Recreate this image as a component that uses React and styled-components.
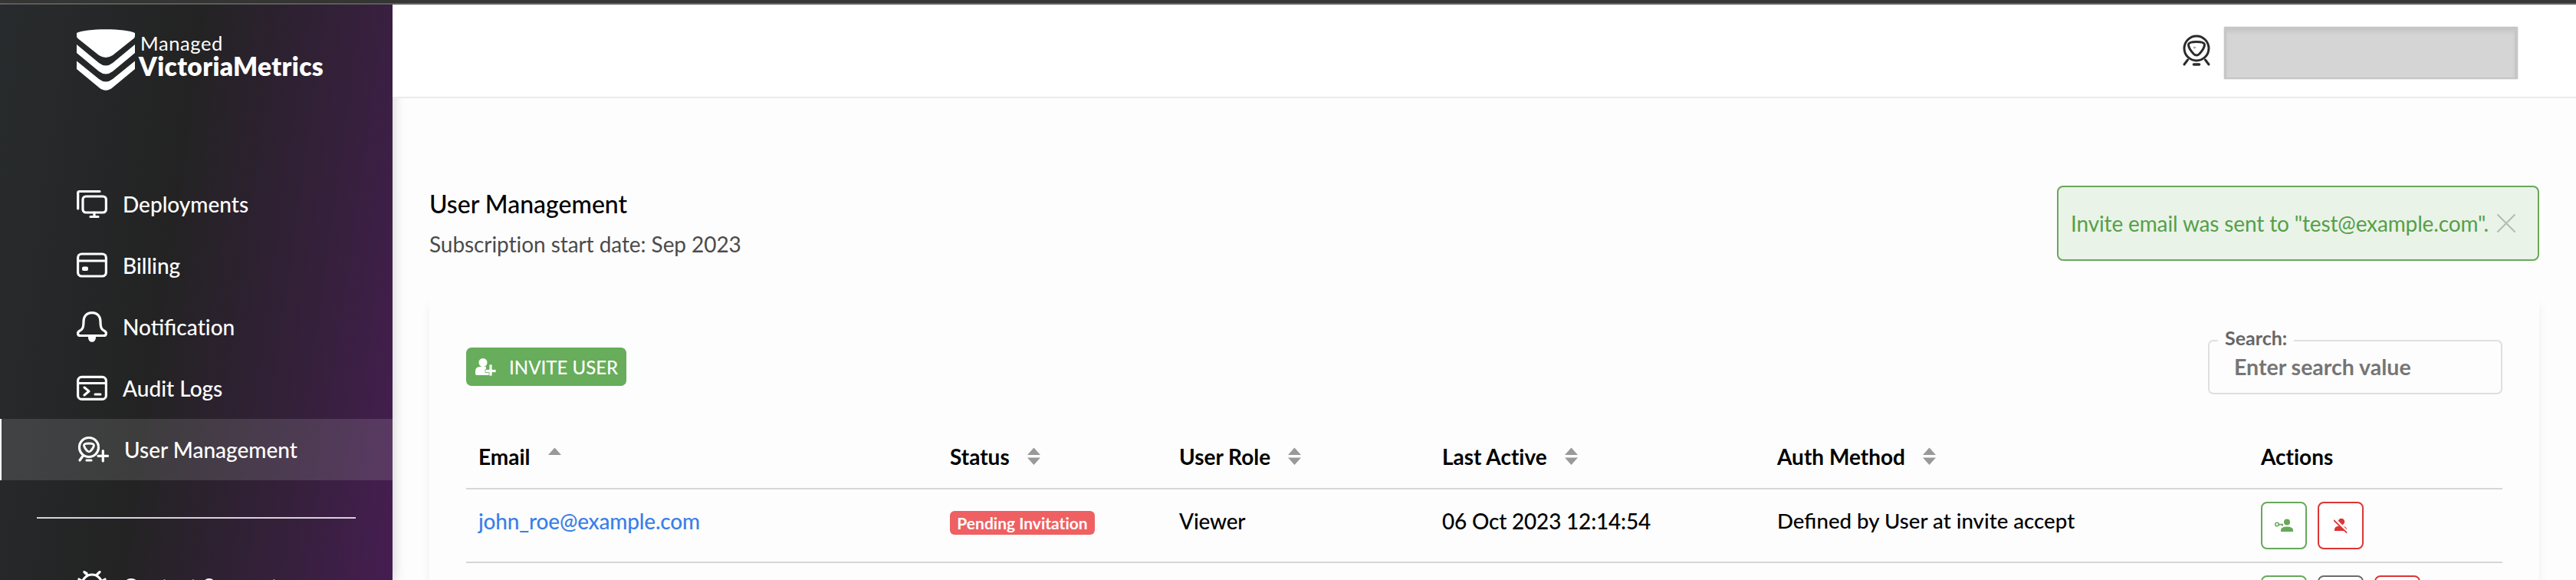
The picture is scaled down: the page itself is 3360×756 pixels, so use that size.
import React from "react";
import styled, { createGlobalStyle } from "styled-components";

const Global = createGlobalStyle`
  * { box-sizing: border-box; }
  html, body { margin: 0; padding: 0; overflow: hidden; background: #fdfdfd; }
  body { font-family: Lato, "Liberation Sans", sans-serif; font-size: 28px; color: #000; font-variant-ligatures: none; }
  svg { display: block; flex: none; }
`;

const Page = styled.div`
  height: 756px; display: flex; flex-direction: column; overflow: hidden;
`;
const Strip = styled.div`
  flex: none; height: 6px; background: #373835; border-bottom: 2px solid #636363;
`;
const Body = styled.div` flex: 1; min-height: 0; display: flex; `;
const Sidebar = styled.aside`
  position: relative; z-index: 1; width: 512px; flex: none; overflow: hidden; color: #fff;
  background: linear-gradient(98deg, #282b2d 0%, #232323 42%, #35203b 76%, #4a1d57 106%);
  box-shadow: 2px 0 14px rgba(0,0,0,.17);
`;
const Brand = styled.div` display: flex; padding: 32px 0 0 100px; height: 220px; `;
const BrandText = styled.div` display: flex; flex-direction: column; padding: 4px 0 0 5px; `;
const BrandTop = styled.span` font-size: 25.5px; line-height: 28px; padding-left: 2px; letter-spacing: .6px; `;
const BrandName = styled.span` font-size: 33.500px; line-height: 33px; font-weight: 800; letter-spacing: .4px; `;
const Nav = styled.nav` display: flex; flex-direction: column; `;
const NavItem = styled.a`
  flex: none; height: 80px; display: flex; align-items: center; gap: 20px; padding-left: 100px; font-weight: 500;
  ${p => p.$active && "background: rgba(255,255,255,.12); box-shadow: inset 2px 0 #fff; gap: 22px;"}
`;
const Joined = styled.span` font-variant-ligatures: common-ligatures; `;
const Rule = styled.hr` width: 416px; height: 2px; margin: 48px; border: 0; background: #d8d0dc; `;
const Main = styled.main` flex: 1; min-width: 0; display: flex; flex-direction: column; background: #fdfdfd; `;
const Header = styled.header`
  position: relative; z-index: 2; flex: none; height: 122px; background: #fff; border-bottom: 2px solid #ebebeb;
  display: flex; justify-content: flex-end; padding: 29px 76px 0 0; gap: 18px; color: #2b2b2b;
`;
const Account = styled.div`
  width: 383px; height: 68px; background: #d5d5d5; border: solid #c6c6c6; border-width: 4px 4px 2px 3px;
  box-shadow: inset 0 4px 3px #cbcbcb, 0 0 2px #ccc;
`;
const Avatar = styled.div` padding-top: 9px; `;
const Content = styled.div` flex: 1; padding: 114px 48px 0; display: flex; flex-direction: column; `;
const TitleRow = styled.div` display: flex; justify-content: space-between; height: 148px; `;
const Title = styled.h1` margin: 5px 0 0; font-size: 32px; line-height: 38px; font-weight: 500; `;
const Sub = styled.p` margin: 16px 0 0; font-size: 28px; line-height: 34px; color: #4b4b4b; letter-spacing: -.07px; `;
const Toast = styled.div`
  width: 629px; height: 98px; border: 2px solid #67a85b; border-radius: 8px; background: #eaf3e8; color: #55a048;
  display: flex; align-items: center; padding-left: 16px; gap: 11px; letter-spacing: -.14px; white-space: nowrap;
`;
const Card = styled.section`
  height: 800px; flex: none; background: #fdfdfd; padding: 63px 48px 0;
  box-shadow: 0 8px 12px rgba(0,0,0,.06);
`;
const Tools = styled.div` display: flex; justify-content: space-between; height: 109px; `;
const Invite = styled.button`
  width: 209px; height: 50px; border: 0; border-radius: 7px; background: #67ad5b; color: #fff;
  font: 500 24px Lato, sans-serif; display: flex; align-items: center; padding: 0 0 0 12px; gap: 17px; white-space: nowrap;
`;
const Field = styled.fieldset`
  width: 384px; height: 84px; margin: -23px 0 0; padding: 0 0 0 32px; border: 2px solid #dfdfdf; border-radius: 7px;
  font-weight: 700;
`;
const Legend = styled.legend`
  margin-left: -21px; padding: 0 9px 7px; font-size: 25px; line-height: 20px; color: #666;
`;
const Input = styled.input`
  border: 0; padding: 0; background: none; display: block; width: 320px; height: 42px; outline: 0; font: 700 28.500px Lato, sans-serif;
  &::placeholder { color: #757575; opacity: 1; }
`;
const Row = styled.div`
  display: grid; grid-template-columns: 615px 299px 343px 437px 631px 1fr; height: ${p => p.$h}px;
  padding: ${p => p.$top}px 0 0 16px; border-bottom: 2px solid #d6d6d6; font-weight: ${p => (p.$head ? 700 : 500)}; line-height: 34px;
  letter-spacing: ${p => (p.$head ? "0" : "-.2px")};
`;
const Th = styled.div` display: flex; gap: 23px; `;
const Link = styled.a` color: #3b7fe8; `;
const Method = styled.div` font-size: 27.700px; letter-spacing: normal; font-variant-ligatures: common-ligatures; `;
const Unjoined = styled.span` font-variant-ligatures: none; `;
const Badge = styled.span`
  display: block; margin-top: 4px; width: 189px; height: 31px; line-height: 31px; text-align: center; background: #ee6062; color: #fff;
  border-radius: 6px; font-size: 21px; font-weight: 700; letter-spacing: 0;
`;
const Actions = styled.div` display: flex; gap: 14px; margin-top: -8px; `;
const Act = styled.button`
  width: 60px; height: 62px; padding: 0; border: 2px solid ${p => p.$c}; border-radius: 8px; background: #fff; color: ${p => p.$c};
  display: flex; align-items: center; justify-content: center;
`;

const Logo = () => (
  <svg width="76" height="80" viewBox="0 0 76 80" fill="#fff">
    <path d="M0 5C10-1.500 66-1.500 76 5V9Q76 11 74 12.500L47 34Q38 40 29 34L2 12.500Q0 11 0 9Z" />
    <path d="M0 20L29 44Q38 51 47 44L76 20V31L47 55Q38 62 29 55L0 31Z" />
    <path d="M0 41.500L29 65Q38 72 47 65L76 41.500V52L47 76Q38 83.500 29 76L0 52Z" />
  </svg>
);
const Line = ({ children, w = 40, h = 40, s = 3.2, ...rest }) => (
  <svg width={w} height={h} viewBox={`0 0 ${w} ${h}`} fill="none" stroke="currentColor" strokeWidth={s} strokeLinecap="round" strokeLinejoin="round" {...rest}>
    {children}
  </svg>
);
const Screens = () => (
  <Line><path d="M1.700 26V5Q1.700 3.500 4 3.500H30" /><rect x="8" y="10" width="30.4" height="21" rx="4" /><path d="M23 31V36M18 36.500H28" /></Line>
);
const CardIcon = () => (
  <Line><rect x="1.6" y="5" width="36.8" height="29" rx="5" /><path d="M2 14H38" /><rect x="9" y="23.500" width="4" height="1.500" strokeWidth="4" /></Line>
);
const Bell = () => (
  <Line>
    <path d="M20 1.600C12.500 1.600 9 7 9 13C9 22 7 24 3.500 25.500C.5 27 1 31.500 4.500 31.500H35.500C39 31.500 39.500 27 36.500 25.500C33 24 31 22 31 13C31 7 27.500 1.600 20 1.600Z" />
    <path d="M16.500 33C16.500 40 23.500 40 23.500 33Z" fill="currentColor" />
  </Line>
);
const Terminal = () => (
  <Line><rect x="1.600" y="5.400" width="36.800" height="29" rx="5" /><path d="M2 13.500H38" strokeWidth="2.800" /><path d="M10 19L16 24L10 29M24 28H31" strokeWidth="3" /></Line>
);
const UserPlus = () => (
  <Line overflow="visible">
    <circle cx="16" cy="17" r="12.500" />
    <path d="M9.500 14.500Q9.500 12 16 12Q22.500 12 22.500 14.500Q22 18 18 22Q16 23.500 14 22Q10 18 9.500 14.500Z" strokeWidth="2.800" />
    <path d="M8 28.500L4 34M13 34H19M34.300 21.500V35M28 28.300H40.600" />
  </Line>
);
const Bug = () => (
  <Line><circle cx="20" cy="18" r="13" /><path d="M10 1.500L14 5.500M11 3H13M30 1.500L26 5.500M3 11L8 14M37 11L32 14" /></Line>
);
const Person = () => (
  <Line w={36} h={44} s={3}>
    <circle cx="18" cy="19" r="16" />
    <path d="M7.500 14Q8 10.500 18 10.500Q28 10.500 28.500 14Q28.500 19 22 26Q18 30 14 26Q7.500 19 7.500 14Z" />
    <path d="M6.500 34L2 40M29.500 34L34 40" /><path d="M14.500 40H21.500" strokeWidth="3.600" /><circle cx="15.500" cy="18" r=".2" strokeWidth="2" />
  </Line>
);
const Sort = ({ up }) => (
  <svg width="17" height="34" viewBox="0 0 17 34" fill="#999">
    <path d="M8.500 5.500L17 15H0Z" />{!up && <path d="M0 18.500H17L8.500 28Z" />}
  </svg>
);
const InviteIcon = () => (
  <svg width="27" height="24" viewBox="0 0 27 24" fill="#fff">
    <circle cx="10" cy="6.500" r="5.500" /><path d="M0 21V18Q0 12 6 12H14V18H18V23H2Q0 23 0 21Z" /><path d="M13 15.500H18V9H22V15.500H27V19.500H22V24H18V19.500H13Z" stroke="#67ad5b" strokeWidth=".8" />
  </svg>
);
const KeyUser = () => (
  <svg width="24" height="18" viewBox="0 0 24 18" fill="currentColor">
    <circle cx="16" cy="4.500" r="4" /><path d="M8 17V15Q8 10.500 16 10.500Q24 10.500 24 15V17Z" />
    <circle cx="3" cy="7.500" r="2.200" fill="none" stroke="currentColor" strokeWidth="1.500" /><path d="M5 6.700H11V9.500H9V8.500H5Z" />
  </svg>
);
const NoUser = () => (
  <svg width="18" height="20" viewBox="0 0 18 20" fill="currentColor">
    <circle cx="10" cy="5" r="4.200" /><path d="M1 17V15Q1 10.500 9 10.500Q17 10.500 17 15V17Z" />
    <path d="M2 2L18 18.500" stroke="#fff" strokeWidth="3" /><path d="M0 3L17 19.500" stroke="currentColor" strokeWidth="1.800" />
  </svg>
);

const green = "#67a85b", red = "#dc3535", gray = "#6c6c6c";

export default function App() {
  return (
    <Page>
      <Global />
      <Strip />
      <Body>
        <Sidebar>
          <Brand>
            <Logo />
            <BrandText><BrandTop>Managed</BrandTop><BrandName>VictoriaMetrics</BrandName></BrandText>
          </Brand>
          <Nav>
            <NavItem><Screens />Deployments</NavItem>
            <NavItem><CardIcon />Billing</NavItem>
            <NavItem><Bell /><Joined>Notifica<Unjoined>tion</Unjoined></Joined></NavItem>
            <NavItem><Terminal />Audit Logs</NavItem>
            <NavItem $active><UserPlus />User Management</NavItem>
          </Nav>
          <Rule />
          <NavItem><Bug />Contact Support</NavItem>
        </Sidebar>
        <Main>
          <Header><Avatar><Person /></Avatar><Account /></Header>
          <Content>
            <TitleRow>
              <div><Title>User Management</Title><Sub>Subscription start date: Sep 2023</Sub></div>
              <Toast>
                <span>Invite email was sent to "test@example.com".</span>
                <Line w={24} h={24} s={2} stroke="#b5bbb4"><path d="M1 1L23 23M23 1L1 23" /></Line>
              </Toast>
            </TitleRow>
            <Card>
              <Tools>
                <Invite><InviteIcon />INVITE USER</Invite>
                <Field><Legend>Search:</Legend><Input placeholder="Enter search value" /></Field>
              </Tools>
              <Row $head $h={76} $top={16}>
                <Th>Email<Sort up /></Th><Th>Status<Sort /></Th><Th>User Role<Sort /></Th>
                <Th>Last Active<Sort /></Th><Th>Auth Method<Sort /></Th><Th>Actions</Th>
              </Row>
              <Row $h={96} $top={24}>
                <Link>john_roe@example.com</Link><div><Badge>Pending Invitation</Badge></div><div>Viewer</div>
                <div>06 Oct 2023 12:14:54</div><Method>Defined by User at invite accept</Method>
                <Actions><Act $c={green}><KeyUser /></Act><Act $c={red}><NoUser /></Act></Actions>
              </Row>
              <Row $h={96} $top={24}>
                <i /><i /><i /><i /><i />
                <Actions><Act $c={green} /><Act $c={gray} /><Act $c={red} /></Actions>
              </Row>
            </Card>
          </Content>
        </Main>
      </Body>
    </Page>
  );
}
